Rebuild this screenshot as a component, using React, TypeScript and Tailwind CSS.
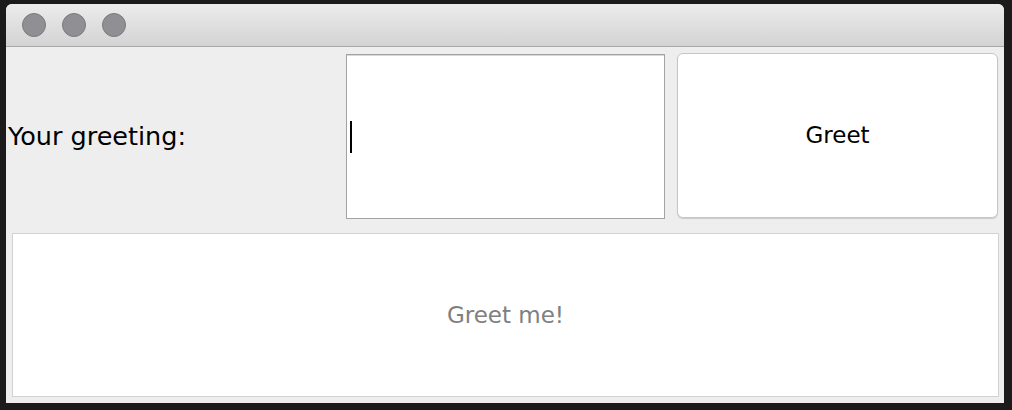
export default function App() {
  return (
    <div className="h-[410px] w-[1012px] bg-[#1b1b1b] pl-[6px] pt-[4px] font-['DejaVu_Sans',sans-serif]">
      <div className="flex h-[399px] w-[998px] flex-col overflow-hidden rounded-t-[6px] bg-[#eeeeee]">
        {/* title bar */}
        <div className="flex h-[43px] items-center gap-[16px] border-b border-[#a8a8a8] bg-gradient-to-b from-[#ececec] to-[#d3d3d3] pl-[16px]">
          <span className="h-[24px] w-[24px] rounded-full border border-[#7a797e] bg-[#908f94]" />
          <span className="h-[24px] w-[24px] rounded-full border border-[#7a797e] bg-[#908f94]" />
          <span className="h-[24px] w-[24px] rounded-full border border-[#7a797e] bg-[#908f94]" />
        </div>

        <div className="flex items-center pt-[7px]">
          <div className="w-[340px] pl-[2px] text-[25.5px] leading-none text-black">Your greeting:</div>
          <div className="flex h-[165px] w-[319px] items-center border border-[#a3a3a3] bg-white pl-[3px] shadow-[inset_0_1px_0_#d8d8d8]">
            <span className="h-[32px] w-[2px] bg-black" />
          </div>
          <button className="ml-[12px] h-[165px] w-[321px] -translate-y-[1px] rounded-[6px] border border-[#c6c6c6] bg-white text-[23px] text-black shadow-[0_1px_1px_rgba(0,0,0,0.15)]">
            Greet
          </button>
        </div>

        <div className="mt-[14px] ml-[6px] flex h-[164px] w-[987px] items-center justify-center border border-[#d2d2d2] bg-white text-[23px] text-[#808080]">
          Greet me!
        </div>
      </div>
    </div>
  )
}
